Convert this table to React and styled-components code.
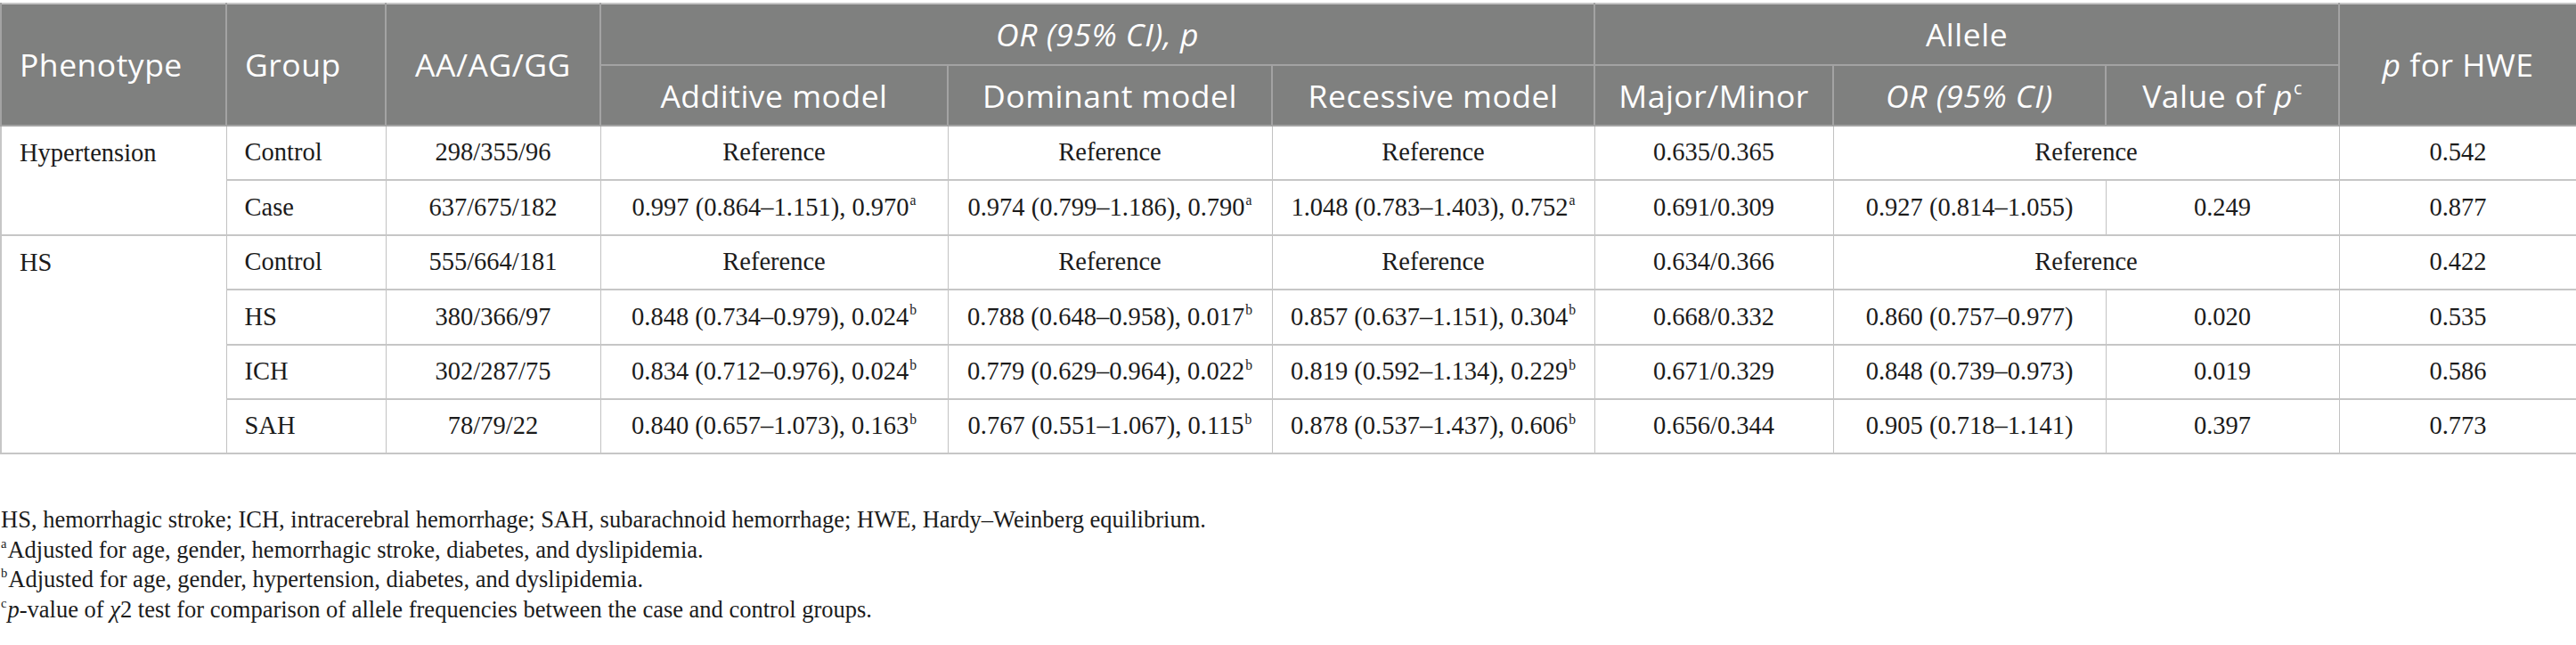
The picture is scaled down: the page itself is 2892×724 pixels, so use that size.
import React from "react";
import styled, { createGlobalStyle } from "styled-components";

const Global = createGlobalStyle`
  html, body { margin: 0; padding: 0; background: #ffffff; }
  body { font-family: "Liberation Serif", "Times New Roman", serif; }
`;

const Page = styled.div`
  width: 2892px;
  padding-top: 3px;
  background: #ffffff;
`;

const Table = styled.table`
  width: 2892px;
  table-layout: fixed;
  border-collapse: collapse;
  border-top: 2px solid #c6c6c6;
  border-left: 2px solid #c6c6c6;
`;

const HeadRow = styled.tr`
  height: ${(p) => p.$h}px;
`;

const BodyRow = styled.tr`
  height: ${(p) => p.$h}px;
`;

const Th = styled.th`
  background: #7f807f;
  color: #ffffff;
  font-family: "Open Sans", "Liberation Sans", sans-serif;
  font-weight: 400;
  font-size: 35.5px;
  letter-spacing: 0.5px;
  font-style: ${(p) => (p.$italic ? "italic" : "normal")};
  text-align: ${(p) => p.$align || "center"};
  padding: 0;
  padding-left: ${(p) => (p.$align === "left" ? "20px" : "0")};
  border: 2px solid #a3a3a3;
  border-top: none;
  vertical-align: middle;
  white-space: nowrap;
  line-height: 1.2;
`;

const Td = styled.td`
  font-family: "Liberation Serif", "Times New Roman", serif;
  font-size: 28.5px;
  color: #1b1b1b;
  text-align: ${(p) => p.$align || "center"};
  padding: ${(p) => (p.$top ? "13px" : "0")} 0 0 ${(p) => (p.$align === "left" ? "20px" : "0")};
  vertical-align: ${(p) => (p.$top ? "top" : "middle")};
  border-left: 1px solid #c2c2c2;
  border-right: 1px solid #c2c2c2;
  border-top: 2px solid #c6c6c6;
  border-bottom: 2px solid #c6c6c6;
  white-space: nowrap;
  line-height: 1.2;
`;

const Sup = styled.sup`
  font-size: 0.55em;
  vertical-align: 0.75em;
  line-height: 0;
  margin-left: 1px;
`;

const It = styled.i`
  font-style: italic;
`;

const Notes = styled.div`
  margin-top: 57px;
  padding-left: 1px;
  font-family: "Liberation Serif", "Times New Roman", serif;
  font-size: 26.5px;
  line-height: 33.5px;
  color: #1b1b1b;
`;

const NoteLine = styled.div`
  white-space: nowrap;
`;

const NoteMark = styled.sup`
  font-size: 0.55em;
  vertical-align: 0.75em;
  line-height: 0;
  margin-right: 1px;
`;

const widths = [253, 179, 241, 390, 364, 362, 268, 306, 262, 267];

const rows = [
  {
    pheno: "Hypertension",
    span: 2,
    group: "Control",
    geno: "298/355/96",
    ref: true,
    major: "0.635/0.365",
    hwe: "0.542",
    h: 61,
  },
  {
    group: "Case",
    geno: "637/675/182",
    add: ["0.997 (0.864–1.151), 0.970", "a"],
    dom: ["0.974 (0.799–1.186), 0.790", "a"],
    rec: ["1.048 (0.783–1.403), 0.752", "a"],
    major: "0.691/0.309",
    or: "0.927 (0.814–1.055)",
    pv: "0.249",
    hwe: "0.877",
    h: 62,
  },
  {
    pheno: "HS",
    span: 4,
    group: "Control",
    geno: "555/664/181",
    ref: true,
    major: "0.634/0.366",
    hwe: "0.422",
    h: 61,
  },
  {
    group: "HS",
    geno: "380/366/97",
    add: ["0.848 (0.734–0.979), 0.024", "b"],
    dom: ["0.788 (0.648–0.958), 0.017", "b"],
    rec: ["0.857 (0.637–1.151), 0.304", "b"],
    major: "0.668/0.332",
    or: "0.860 (0.757–0.977)",
    pv: "0.020",
    hwe: "0.535",
    h: 62,
  },
  {
    group: "ICH",
    geno: "302/287/75",
    add: ["0.834 (0.712–0.976), 0.024", "b"],
    dom: ["0.779 (0.629–0.964), 0.022", "b"],
    rec: ["0.819 (0.592–1.134), 0.229", "b"],
    major: "0.671/0.329",
    or: "0.848 (0.739–0.973)",
    pv: "0.019",
    hwe: "0.586",
    h: 61,
  },
  {
    group: "SAH",
    geno: "78/79/22",
    add: ["0.840 (0.657–1.073), 0.163", "b"],
    dom: ["0.767 (0.551–1.067), 0.115", "b"],
    rec: ["0.878 (0.537–1.437), 0.606", "b"],
    major: "0.656/0.344",
    or: "0.905 (0.718–1.141)",
    pv: "0.397",
    hwe: "0.773",
    h: 61,
  },
];

const Val = ({ v }) => (
  <>
    {v[0]}
    <Sup>{v[1]}</Sup>
  </>
);

export default function App() {
  return (
    <Page>
      <Global />
      <Table>
        <colgroup>
          {widths.map((w, i) => (
            <col key={i} style={{ width: w }} />
          ))}
        </colgroup>
        <thead>
          <HeadRow $h={69}>
            <Th rowSpan={2} $align="left">Phenotype</Th>
            <Th rowSpan={2} $align="left">Group</Th>
            <Th rowSpan={2}>AA/AG/GG</Th>
            <Th colSpan={3} $italic>OR (95% CI), p</Th>
            <Th colSpan={3}>Allele</Th>
            <Th rowSpan={2}>
              <It>p</It> for HWE
            </Th>
          </HeadRow>
          <HeadRow $h={68}>
            <Th>Additive model</Th>
            <Th>Dominant model</Th>
            <Th>Recessive model</Th>
            <Th>Major/Minor</Th>
            <Th $italic>OR (95% CI)</Th>
            <Th>
              Value of <It>p</It>
              <Sup>c</Sup>
            </Th>
          </HeadRow>
        </thead>
        <tbody>
          {rows.map((r, i) => (
            <BodyRow key={i} $h={r.h}>
              {r.pheno && (
                <Td rowSpan={r.span} $align="left" $top>
                  {r.pheno}
                </Td>
              )}
              <Td $align="left">{r.group}</Td>
              <Td>{r.geno}</Td>
              {r.ref ? (
                <>
                  <Td>Reference</Td>
                  <Td>Reference</Td>
                  <Td>Reference</Td>
                </>
              ) : (
                <>
                  <Td><Val v={r.add} /></Td>
                  <Td><Val v={r.dom} /></Td>
                  <Td><Val v={r.rec} /></Td>
                </>
              )}
              <Td>{r.major}</Td>
              {r.ref ? (
                <Td colSpan={2}>Reference</Td>
              ) : (
                <>
                  <Td>{r.or}</Td>
                  <Td>{r.pv}</Td>
                </>
              )}
              <Td>{r.hwe}</Td>
            </BodyRow>
          ))}
        </tbody>
      </Table>
      <Notes>
        <NoteLine>
          HS, hemorrhagic stroke; ICH, intracerebral hemorrhage; SAH, subarachnoid hemorrhage; HWE, Hardy–Weinberg equilibrium.
        </NoteLine>
        <NoteLine>
          <NoteMark>a</NoteMark>Adjusted for age, gender, hemorrhagic stroke, diabetes, and dyslipidemia.
        </NoteLine>
        <NoteLine>
          <NoteMark>b</NoteMark>Adjusted for age, gender, hypertension, diabetes, and dyslipidemia.
        </NoteLine>
        <NoteLine>
          <NoteMark>c</NoteMark>
          <It>p</It>-value of <It>χ</It>2 test for comparison of allele frequencies between the case and control groups.
        </NoteLine>
      </Notes>
    </Page>
  );
}
